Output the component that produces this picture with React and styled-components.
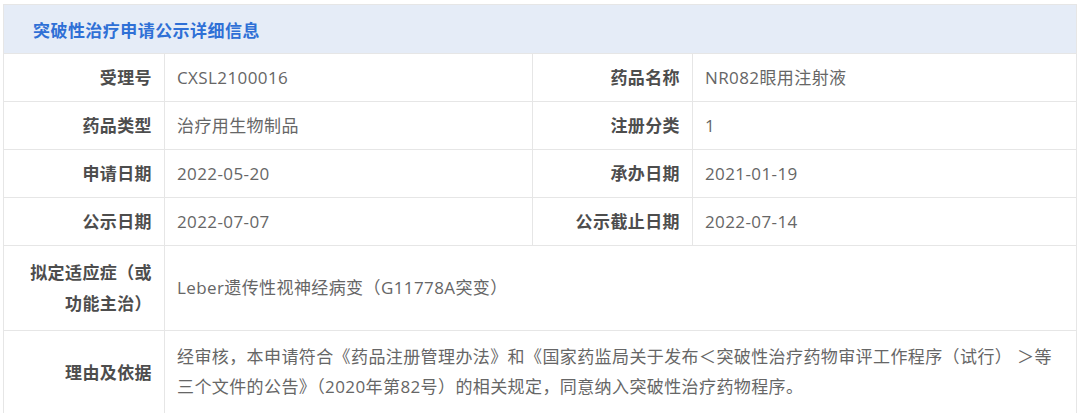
import React from 'react'
import styled, { createGlobalStyle } from 'styled-components'

const GlobalStyle = createGlobalStyle`
  body {
    margin: 0;
    background: #fff;
    font-family: "Open Sans", "Noto Sans CJK SC", sans-serif;
  }
`

const Page = styled.div`
  padding: 4px 4px 0 3px;
`

const Table = styled.div`
  width: 1073px;
  border: 1px solid #e6e6e6;
  border-bottom: none;
  border-right: none;
  display: grid;
  grid-template-columns: 161px 368px 160px 1fr;
`

const Header = styled.div`
  grid-column: 1 / -1;
  height: 48px;
  display: flex;
  align-items: center;
  padding-left: 29px;
  background: #e5ecf7;
  color: #2f70d6;
  font-size: 17px;
  letter-spacing: 0.45px;
  font-weight: 700;
  border-right: 1px solid #e6e6e6;
  border-bottom: 1px solid #e6e6e6;
`

const Cell = styled.div`
  box-sizing: border-box;
  min-height: 48px;
  display: flex;
  align-items: center;
  border-right: 1px solid #e6e6e6;
  border-bottom: 1px solid #e6e6e6;
  font-size: 17px;
  letter-spacing: 0.4px;
  line-height: 30px;
  padding: ${(p) => (p.$tall ? '11px 12px' : '0 12px')};
`

const Label = styled(Cell)`
  justify-content: flex-end;
  text-align: right;
  color: #4d4d4d;
  font-weight: 700;
  padding-left: 22px;
  line-height: 31px;
`

const Value = styled(Cell)`
  color: #666;
  grid-column: ${(p) => (p.$wide ? '2 / -1' : 'auto')};
`

const pairs = [
  ['受理号', 'CXSL2100016', '药品名称', 'NR082眼用注射液'],
  ['药品类型', '治疗用生物制品', '注册分类', '1'],
  ['申请日期', '2022-05-20', '承办日期', '2021-01-19'],
  ['公示日期', '2022-07-07', '公示截止日期', '2022-07-14'],
]

const App = () => (
  <Page>
    <GlobalStyle />
    <Table>
      <Header>突破性治疗申请公示详细信息</Header>
      {pairs.map(([l1, v1, l2, v2]) => (
        <React.Fragment key={l1}>
          <Label>{l1}</Label>
          <Value>{v1}</Value>
          <Label>{l2}</Label>
          <Value>{v2}</Value>
        </React.Fragment>
      ))}
      <Label $tall>拟定适应症（或功能主治）</Label>
      <Value $wide $tall>Leber遗传性视神经病变（G11778A突变）</Value>
      <Label $tall>理由及依据</Label>
      <Value $wide $tall>
        经审核，本申请符合《药品注册管理办法》和《国家药监局关于发布＜突破性治疗药物审评工作程序（试行） ＞等三个文件的公告》（2020年第82号）的相关规定，同意纳入突破性治疗药物程序。
      </Value>
    </Table>
  </Page>
)

export default App
